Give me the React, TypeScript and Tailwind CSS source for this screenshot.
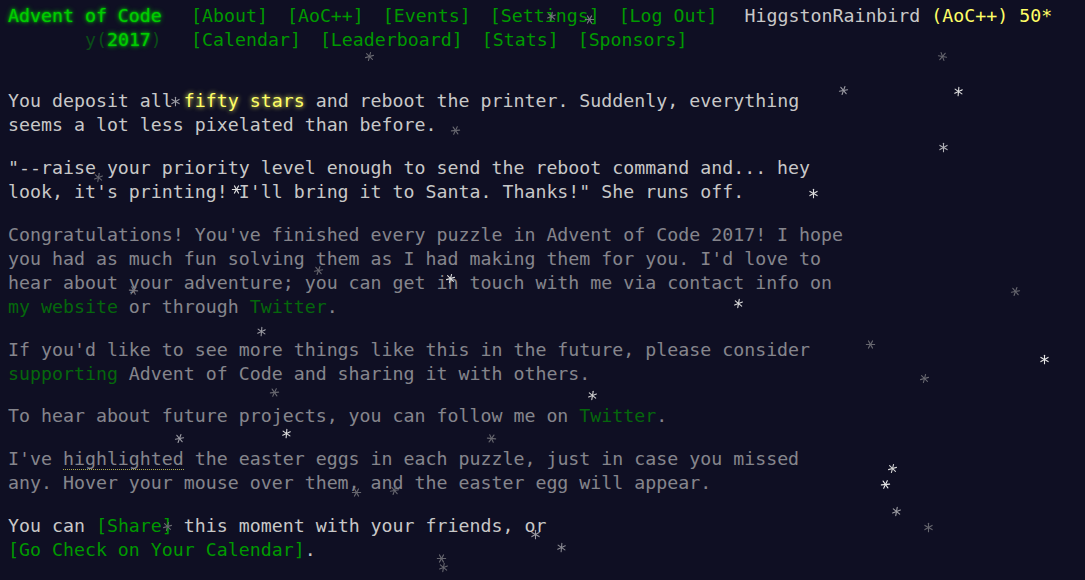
import React from "react";

type S = { x: number; y: number; c: string; r: number };

const stars: S[] = [
  { x: 551, y: 16, c: "#77777f", r: 10 },
  { x: 589, y: 19, c: "#77777f", r: 30 },
  { x: 369, y: 56, c: "#66666e", r: 15 },
  { x: 942, y: 56, c: "#66666e", r: 40 },
  { x: 843, y: 90, c: "#9a9aa2", r: 20 },
  { x: 958, y: 91, c: "#dddddd", r: 5 },
  { x: 175, y: 101, c: "#9a9aa2", r: 0 },
  { x: 455, y: 130, c: "#66666e", r: 25 },
  { x: 943, y: 147, c: "#b0b0b6", r: 0 },
  { x: 98, y: 177, c: "#66666e", r: 10 },
  { x: 236, y: 189, c: "#dddddd", r: 30 },
  { x: 813, y: 193, c: "#dddddd", r: 0 },
  { x: 318, y: 270, c: "#66666e", r: 20 },
  { x: 133, y: 290, c: "#77777f", r: 35 },
  { x: 450, y: 278, c: "#dddddd", r: 15 },
  { x: 738, y: 303, c: "#dddddd", r: 10 },
  { x: 1015, y: 291, c: "#66666e", r: 20 },
  { x: 261, y: 331, c: "#9a9aa2", r: 5 },
  { x: 870, y: 344, c: "#66666e", r: 30 },
  { x: 1044, y: 359, c: "#e6e6e6", r: 0 },
  { x: 924, y: 378, c: "#66666e", r: 15 },
  { x: 592, y: 395, c: "#d0d0d0", r: 10 },
  { x: 274, y: 392, c: "#66666e", r: 25 },
  { x: 179, y: 438, c: "#9a9aa2", r: 20 },
  { x: 286, y: 433, c: "#dddddd", r: 5 },
  { x: 491, y: 438, c: "#66666e", r: 35 },
  { x: 892, y: 468, c: "#d0d0d0", r: 15 },
  { x: 885, y: 484, c: "#e6e6e6", r: 25 },
  { x: 896, y: 511, c: "#a0a0a6", r: 10 },
  { x: 928, y: 527, c: "#66666e", r: 0 },
  { x: 356, y: 492, c: "#66666e", r: 30 },
  { x: 394, y: 490, c: "#66666e", r: 20 },
  { x: 167, y: 526, c: "#66666e", r: 15 },
  { x: 535, y: 534, c: "#9a9aa2", r: 0 },
  { x: 561, y: 547, c: "#8a8a92", r: 5 },
  { x: 441, y: 558, c: "#66666e", r: 30 },
  { x: 443, y: 567, c: "#66666e", r: 10 },
];

function Star({ s }: { s: S }) {
  return (
    <svg
      className="absolute pointer-events-none"
      width="11"
      height="11"
      viewBox="-5.5 -5.5 11 11"
      style={{ left: s.x - 5.5, top: s.y - 5.5, transform: `rotate(${s.r}deg)` }}
    >
      <g stroke={s.c} strokeWidth="1.1" strokeLinecap="round">
        <line x1="0" y1="-4.2" x2="0" y2="4.2" />
        <line x1="-3.6" y1="-2.1" x2="3.6" y2="2.1" />
        <line x1="-3.6" y1="2.1" x2="3.6" y2="-2.1" />
      </g>
    </svg>
  );
}

const glowGreen = "[text-shadow:0_0_2px_#00cc00,0_0_5px_#00cc00]";

export default function App() {
  const nav1 = ["[About]", "[AoC++]", "[Events]", "[Settings]", "[Log Out]"];
  const nav2 = ["[Calendar]", "[Leaderboard]", "[Stats]", "[Sponsors]"];
  return (
    <div
      className="relative w-[1085px] h-[580px] overflow-hidden bg-[#0f0f23] text-[#c8c8c8] text-[18.25px] leading-[24px] whitespace-pre"
      style={{ fontFamily: '"DejaVu Sans Mono", "Liberation Mono", monospace' }}
    >
      <header className="pt-[4px] pl-[8px]">
        <div className="flex">
          <h1 className={`w-[183px] text-[#00cc00] font-normal ${glowGreen}`}>Advent of Code</h1>
          <nav className="flex gap-[19px] text-[#009900]">
            {nav1.map((n) => (
              <span key={n}>{n}</span>
            ))}
          </nav>
          <div className="ml-[27px]">
            HiggstonRainbird <span className="text-[#ffff66]">(AoC++)</span>{" "}
            <span className="text-[#ffff66]">50*</span>
          </div>
        </div>
        <div className="flex">
          <h1 className="w-[183px] font-normal">
            {"       "}
            <span className="text-[#00cc00] opacity-[0.33]">y(</span>
            <span className={`text-[#00cc00] ${glowGreen}`}>2017</span>
            <span className="text-[#00cc00] opacity-[0.33]">)</span>
          </h1>
          <nav className="flex gap-[19px] text-[#009900]">
            {nav2.map((n) => (
              <span key={n}>{n}</span>
            ))}
          </nav>
        </div>
      </header>

      <main className="mt-[37px] pl-[8px] flex flex-col gap-[18.85px]">
        <p>
          You deposit all{" "}
          <span className="text-[#ffff66] [text-shadow:0_0_5px_#ffff66]">fifty stars</span> and reboot the printer. Suddenly, everything
          {"\n"}seems a lot less pixelated than before.
        </p>
        <p>
          {'"--raise your priority level enough to send the reboot command and... hey\nlook, it\'s printing! I\'ll bring it to Santa. Thanks!" She runs off.'}
        </p>
        <p className="opacity-[0.64]">
          {"Congratulations! You've finished every puzzle in Advent of Code 2017! I hope\nyou had as much fun solving them as I had making them for you. I'd love to\nhear about your adventure; you can get in touch with me via contact info on\n"}
          <span className="text-[#009900]">my website</span> or through <span className="text-[#009900]">Twitter</span>.
        </p>
        <p className="opacity-[0.64]">
          {"If you'd like to see more things like this in the future, please consider\n"}
          <span className="text-[#009900]">supporting</span> Advent of Code and sharing it with others.
        </p>
        <p className="opacity-[0.64]">
          To hear about future projects, you can follow me on <span className="text-[#009900]">Twitter</span>.
        </p>
        <p className="opacity-[0.64]">
          I've <span className="border-b border-dotted border-[#ffff66]">highlighted</span>
          {" the easter eggs in each puzzle, just in case you missed\nany. Hover your mouse over them, and the easter egg will appear."}
        </p>
        <p>
          You can <span className="text-[#009900]">[Share]</span> this moment with your friends, or
          {"\n"}
          <span className="text-[#009900]">[Go Check on Your Calendar]</span>.
        </p>
      </main>

      {stars.map((s, i) => (
        <Star key={i} s={s} />
      ))}
    </div>
  );
}
